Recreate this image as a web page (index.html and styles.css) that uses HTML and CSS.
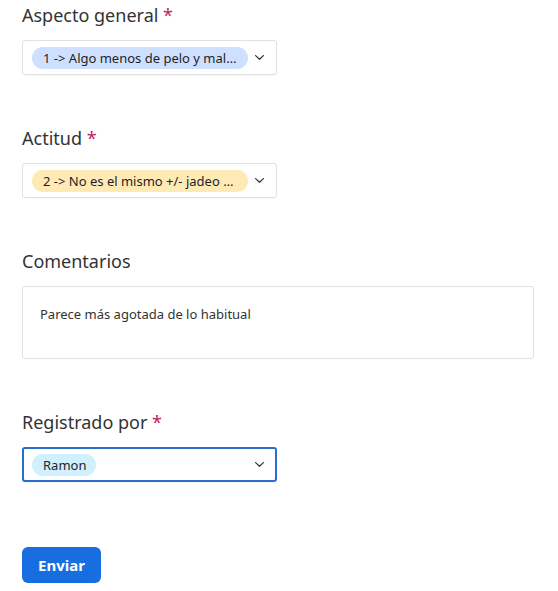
FILE: index.html
```html
<!DOCTYPE html>
<html lang="es">
<head>
<meta charset="utf-8">
<title>Formulario</title>
<link rel="stylesheet" href="styles.css">
</head>
<body>
<form class="form">
  <div class="field">
    <div class="label">Aspecto general <span class="req">*</span></div>
    <div class="select">
      <div class="value"><span class="pill pill-fill pill-blue">1 -&gt; Algo menos de pelo y mal…</span></div>
      <svg class="chev" width="9" height="5" viewBox="0 0 9 5"><polyline points="0.6,0.6 4.5,4.3 8.4,0.6" fill="none" stroke="#333" stroke-width="1.2" stroke-linecap="round" stroke-linejoin="round"/></svg>
    </div>
  </div>
  <div class="field">
    <div class="label">Actitud <span class="req">*</span></div>
    <div class="select">
      <div class="value"><span class="pill pill-fill pill-yellow">2 -&gt; No es el mismo +/- jadeo …</span></div>
      <svg class="chev" width="9" height="5" viewBox="0 0 9 5"><polyline points="0.6,0.6 4.5,4.3 8.4,0.6" fill="none" stroke="#333" stroke-width="1.2" stroke-linecap="round" stroke-linejoin="round"/></svg>
    </div>
  </div>
  <div class="field">
    <div class="label">Comentarios</div>
    <div class="textarea">Parece más agotada de lo habitual</div>
  </div>
  <div class="field">
    <div class="label">Registrado por <span class="req">*</span></div>
    <div class="select focused">
      <div class="value"><span class="pill pill-cyan">Ramon</span></div>
      <svg class="chev" width="9" height="5" viewBox="0 0 9 5"><polyline points="0.6,0.6 4.5,4.3 8.4,0.6" fill="none" stroke="#333" stroke-width="1.2" stroke-linecap="round" stroke-linejoin="round"/></svg>
    </div>
  </div>
  <div class="actions">
    <button type="button" class="submit">Enviar</button>
  </div>
</form>
</body>
</html>
```

FILE: styles.css
```css
html, body {
  margin: 0;
  padding: 0;
  background: #fff;
}
body {
  font-family: "Noto Sans", "Open Sans", sans-serif;
  color: #333;
}
.form {
  padding: 3px 24px 0 22px;
}
.field {
  margin-bottom: 51px;
}
.label {
  font-size: 18px;
  line-height: 24px;
  color: #333;
  margin-bottom: 13px;
}
.req {
  color: #c21f5b;
}
.select {
  box-sizing: border-box;
  width: 255px;
  height: 35px;
  border: 1px solid #e1e1e1;
  border-radius: 3px;
  display: flex;
  align-items: center;
  padding: 0 12px 0 9px;
  gap: 7px;
  box-shadow: 0 1px 1px rgba(0,0,0,0.03);
}
.select.focused {
  border: 2px solid #2b6dcc;
  padding-left: 8px;
  padding-right: 11px;
}
.value {
  flex: 1;
  min-width: 0;
  display: flex;
}
.pill {
  display: inline-block;
  max-width: 100%;
  box-sizing: border-box;
  height: 22px;
  line-height: 22px;
  padding: 0 10px 0 11px;
  border-radius: 11px;
  font-size: 13px;
  color: #1d1f25;
  white-space: nowrap;
}
.pill-fill {
  flex: 1;
  min-width: 0;
}
.pill-blue { background: #cfdfff; }
.pill-yellow { background: #ffeab6; }
.pill-cyan { background: #d0f0fd; }
.chev {
  flex: none;
  display: block;
}
.textarea {
  box-sizing: border-box;
  width: 512px;
  height: 73px;
  margin-top: 1px;
  border: 1px solid #e1e1e1;
  border-radius: 3px;
  padding: 18px 17px;
  font-size: 13px;
  line-height: 19.5px;
  color: #333;
}
.actions {
  padding-top: 14px;
}
.submit {
  font-family: "Noto Sans", "Open Sans", sans-serif;
  font-weight: 700;
  font-size: 15px;
  color: #fff;
  background: #166ee1;
  border: none;
  border-radius: 6px;
  height: 36px;
  padding: 0 16px;
  cursor: pointer;
}
```
